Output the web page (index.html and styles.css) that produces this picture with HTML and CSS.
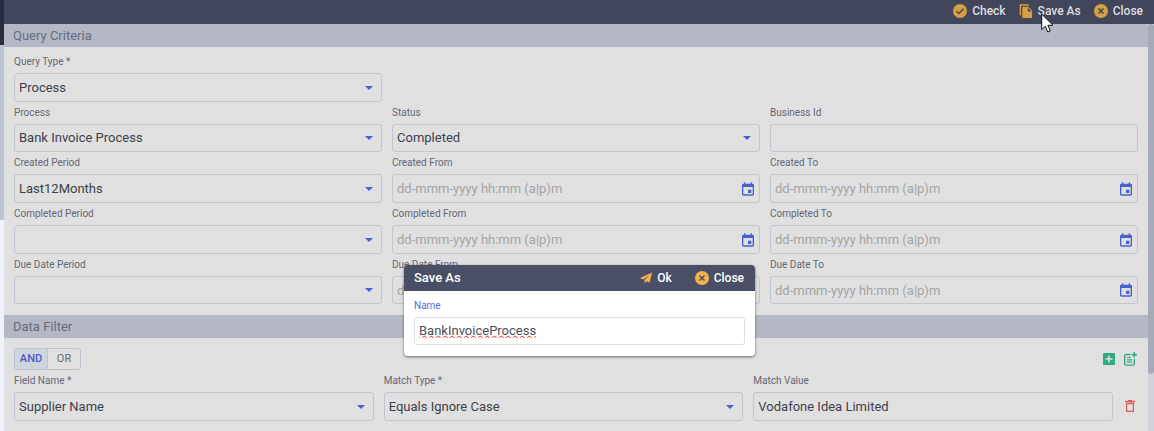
FILE: index.html
```html
<!DOCTYPE html>
<html lang="en">
<head>
<meta charset="utf-8">
<title>Query</title>
<link rel="stylesheet" href="styles.css">
</head>
<body>
<svg class="sprite" aria-hidden="true">
  <symbol id="caret" viewBox="0 0 8 4"><path d="M0 0h8L4 4z"/></symbol>
  <symbol id="calendar" viewBox="3 1 18 20"><path d="M17 12h-5v5h5v-5zM16 1v2H8V1H6v2H5c-1.100 0-2 .9-2 2v14c0 1.100.9 2 2 2h14c1.100 0 2-.9 2-2V5c0-1.100-.9-2-2-2h-1V1h-2zm3 18H5V8h14v11z"/></symbol>
  <symbol id="close" viewBox="0 0 14 14"><circle cx="7" cy="7" r="7" fill="currentColor"/><path class="mark" d="M4.500 4.500l5 5m0-5l-5 5"/></symbol>
</svg>
<div class="app">
  <div class="side"><div class="side-top"></div><div class="side-thumb"></div></div>
  <main class="main">
    <header class="toolbar">
      <button class="action" type="button"><svg class="action-icon" viewBox="0 0 14 14"><circle cx="7" cy="7" r="7" fill="currentColor"/><path class="mark" d="M3.500 7.200l2.300 2.300 4.700-4.800"/></svg>Check</button>
      <button class="action" type="button"><svg class="action-icon" viewBox="0 0 14 15"><path d="M1 12V1h9" fill="none" stroke="currentColor" stroke-width="1.500"/><path d="M4 3h5.500L13.500 7v8H3V4q0-1 1-1zM9 4v4h4z" fill="currentColor" fill-rule="evenodd"/></svg>Save As</button>
      <button class="action" type="button"><svg class="action-icon"><use href="#close"/></svg>Close</button>
    </header>
    <div class="body">
      <div class="content">
        <h2 class="section-title">Query Criteria</h2>
        <form class="criteria">
          <div class="row">
            <div class="field"><label for="qt">Query Type *</label><div class="control"><select id="qt"><option>Process</option></select><svg class="caret"><use href="#caret"/></svg></div></div>
          </div>
          <div class="row row-compact">
            <div class="field"><label for="pr">Process</label><div class="control"><select id="pr"><option>Bank Invoice Process</option></select><svg class="caret"><use href="#caret"/></svg></div></div>
            <div class="field"><label for="st">Status</label><div class="control"><select id="st"><option>Completed</option></select><svg class="caret"><use href="#caret"/></svg></div></div>
            <div class="field"><label for="bi">Business Id</label><div class="control"><input id="bi" type="text"></div></div>
          </div>
          <div class="row">
            <div class="field"><label for="cp">Created Period</label><div class="control"><select id="cp"><option>Last12Months</option></select><svg class="caret"><use href="#caret"/></svg></div></div>
            <div class="field"><label for="cf">Created From</label><div class="control"><input id="cf" type="text" placeholder="dd-mmm-yyyy hh:mm (a|p)m"><svg class="calendar"><use href="#calendar"/></svg></div></div>
            <div class="field"><label for="ct">Created To</label><div class="control"><input id="ct" type="text" placeholder="dd-mmm-yyyy hh:mm (a|p)m"><svg class="calendar"><use href="#calendar"/></svg></div></div>
          </div>
          <div class="row">
            <div class="field"><label for="mp">Completed Period</label><div class="control"><select id="mp"><option></option></select><svg class="caret"><use href="#caret"/></svg></div></div>
            <div class="field"><label for="mf">Completed From</label><div class="control"><input id="mf" type="text" placeholder="dd-mmm-yyyy hh:mm (a|p)m"><svg class="calendar"><use href="#calendar"/></svg></div></div>
            <div class="field"><label for="mt">Completed To</label><div class="control"><input id="mt" type="text" placeholder="dd-mmm-yyyy hh:mm (a|p)m"><svg class="calendar"><use href="#calendar"/></svg></div></div>
          </div>
          <div class="row row-compact">
            <div class="field"><label for="dp">Due Date Period</label><div class="control"><select id="dp"><option></option></select><svg class="caret"><use href="#caret"/></svg></div></div>
            <div class="field"><label for="df">Due Date From</label><div class="control"><input id="df" type="text" placeholder="dd-mmm-yyyy hh:mm (a|p)m"><svg class="calendar"><use href="#calendar"/></svg></div></div>
            <div class="field"><label for="dt">Due Date To</label><div class="control"><input id="dt" type="text" placeholder="dd-mmm-yyyy hh:mm (a|p)m"><svg class="calendar"><use href="#calendar"/></svg></div></div>
          </div>
        </form>
        <h2 class="section-title">Data Filter</h2>
        <form class="filter">
          <div class="filter-bar">
            <div class="toggle"><button class="toggle-item active" type="button">AND</button><button class="toggle-item" type="button">OR</button></div>
            <div class="tools">
              <button class="tool" type="button" aria-label="Add condition"><svg width="12" height="12" viewBox="0 0 12 12"><rect width="12" height="12" rx="1" fill="currentColor"/><path d="M6 2.500v7M2.500 6h7" stroke="#e0e0e0" stroke-width="1.600"/></svg></button>
              <button class="tool" type="button" aria-label="Add group"><svg width="13" height="14" viewBox="0 0 13 14" fill="none" stroke="currentColor"><path d="M6.500 2.500H2q-1.300 0-1.300 1.300v8q0 1.300 1.300 1.300h7q1.300 0 1.300-1.300V7" stroke-width="1.400"/><path d="M3 5.500h4M3 7.800h5M3 10.100h5" stroke-width="1.200"/><path d="M10.300 0v5.600M7.500 2.800h5.500" stroke-width="1.500"/></svg></button>
            </div>
          </div>
          <div class="condition">
            <div class="field"><label for="fn">Field Name *</label><div class="control"><select id="fn"><option>Supplier Name</option></select><svg class="caret"><use href="#caret"/></svg></div></div>
            <div class="field"><label for="my">Match Type *</label><div class="control"><select id="my"><option>Equals Ignore Case</option></select><svg class="caret"><use href="#caret"/></svg></div></div>
            <div class="field"><label for="mv">Match Value</label><div class="control"><input id="mv" type="text" value="Vodafone Idea Limited"></div></div>
            <button class="trash" type="button" aria-label="Delete condition"><svg width="10" height="12" viewBox="0 0 10 12" fill="none" stroke="currentColor" stroke-width="1.300"><path d="M0 1.500h10M3 .7h4M1.600 3.500h6.800v7.800H1.600z"/></svg></button>
          </div>
        </form>
      </div>
      <div class="scroll"><div class="scroll-thumb"></div></div>
    </div>
    <section class="dialog" role="dialog" aria-labelledby="dlg">
      <header class="dialog-head">
        <h2 class="dialog-title" id="dlg">Save As</h2>
        <button class="action" type="button"><svg class="send-icon" viewBox="0 0 13 12" fill="currentColor"><path d="M13 0L0 6l3.500 1.600L10 3 5 8.200V12l2-2.600 3.500 1.600z"/></svg>Ok</button>
        <button class="action" type="button"><svg class="action-icon"><use href="#close"/></svg>Close</button>
      </header>
      <div class="dialog-body field">
        <label for="nm">Name</label>
        <div class="control"><input id="nm" class="misspelt" type="text" value="BankInvoiceProcess"></div>
      </div>
    </section>
    <svg class="cursor" viewBox="0 0 13 20"><path d="M.7 1v15.500l3.600-3.300 2.500 5.800 2.600-1.100-2.500-5.600H12z" fill="#fff" stroke="#111" stroke-width="1"/></svg>
  </main>
</div>
</body>
</html>
```
FILE: styles.css
```css
* { box-sizing: border-box; }
body { margin: 0; background: #e0e0e0; color: #3d404b; font: 13px/16px Roboto, sans-serif; overflow: hidden; }
button, input, select { font: inherit; color: inherit; margin: 0; }
button { background: none; border: 0; padding: 0; }
.sprite { position: absolute; width: 0; height: 0; }
.app { display: flex; min-height: 100vh; }
.side { width: 4px; background: #eef2fb; }
.side-top { height: 45px; background: #2a2c3f; }
.side-thumb { height: 175px; background: #bdc4d1; }
.main { flex: 1; display: flex; flex-direction: column; position: relative; }

.toolbar { display: flex; justify-content: flex-end; align-items: center; gap: 13px; height: 24px; padding: 0 11px 3px 0; background: #41465a; }
.toolbar .action { color: #dcdde0; }
.toolbar .action-icon { color: #d69f42; --mark: #41465a; }
.action { display: flex; align-items: center; gap: 5px; color: #fff; font-size: 12px; font-weight: 500; }
.action-icon { width: 14px; height: 14px; color: #f5b249; --mark: #4a4f65; }
.mark { fill: none; stroke: var(--mark); stroke-width: 1.5; }

.body { flex: 1; display: flex; }
.content { flex: 1; }
.scroll { width: 6px; background: #d0d4db; }
.scroll-thumb { height: 350px; background: #a4aab8; border-radius: 3px; }
.section-title { margin: 0; padding: 0 9px; height: 23px; font-size: 13px; line-height: 23px; font-weight: 400; color: #676b7c; background: #b4b8c5; }
.criteria { padding: 8px 10px 11px; }
.row { display: grid; grid-template-columns: repeat(3, 1fr); gap: 10px; }
.field label { display: block; height: 22px; padding-top: 1px; font-size: 10px; line-height: 12px; color: #646777; }
.row + .row .field label { padding-top: 5px; }
.criteria .row:first-child label { height: 18px; padding-top: 1px; }
.control { display: grid; align-items: center; }
.control > * { grid-area: 1 / 1; }
.control input, .control select { width: 100%; height: 29px; padding: 0 4px; border: 1px solid #c1c5d1; border-radius: 3px; background: transparent; appearance: none; outline: 0; }
.row-compact .control input, .row-compact .control select { height: 28px; }
.control input::placeholder { color: #a3a4a7; opacity: 1; }
.caret { justify-self: end; width: 8px; height: 4px; margin-right: 9px; fill: #4961cf; pointer-events: none; }
.calendar { justify-self: end; width: 12px; height: 14px; margin-right: 6px; fill: #4961cf; }

.filter { padding: 10px; }
.filter-bar { display: flex; justify-content: space-between; align-items: center; margin-bottom: 4px; }
.toggle { display: flex; height: 22px; border: 1px solid #bcc3d0; border-radius: 3px; overflow: hidden; }
.toggle-item { width: 32px; font-size: 11px; font-weight: 400; color: #696a70; }
.toggle-item.active { width: 33px; border-right: 1px solid #bcc3d0; font-weight: 500; color: #4d58cc; background: #d0d4dc; }
.tools { display: flex; align-items: center; gap: 9px; margin-right: 1px; }
.tool { display: flex; color: #2eac7d; }
.condition { display: grid; grid-template-columns: repeat(3, 1fr) 15px; gap: 10px; }
.condition .field label { height: 18px; }
.trash { align-self: end; height: 29px; display: flex; align-items: center; justify-content: flex-end; padding: 0 3px 2px 0; color: #db5c5c; }

.dialog { position: absolute; top: 265px; left: 400px; width: 351px; border-radius: 4px; background: #fff; box-shadow: 0 1px 3px #0008; overflow: hidden; }
.dialog-head { display: flex; align-items: center; height: 26px; padding: 0 11px 0 10px; gap: 23px; background: #4a4f65; }
.dialog-title { flex: 1; margin: 0; font-size: 13px; font-weight: 500; color: #fff; }
.send-icon { width: 12px; height: 12px; color: #f5b249; }
.dialog-body { padding: 8px 10px 11px; }
.dialog-body.field label { height: 18px; color: #5b68d6; }
.dialog .control input { height: 28px; padding-bottom: 2px; border-color: #d9deeb; color: #4c4e57; }
.misspelt { text-decoration: underline wavy #e22 1px; text-decoration-skip-ink: none; text-underline-offset: 0; }
.cursor { position: absolute; left: 1037px; top: 13px; width: 13px; height: 20px; }
```
